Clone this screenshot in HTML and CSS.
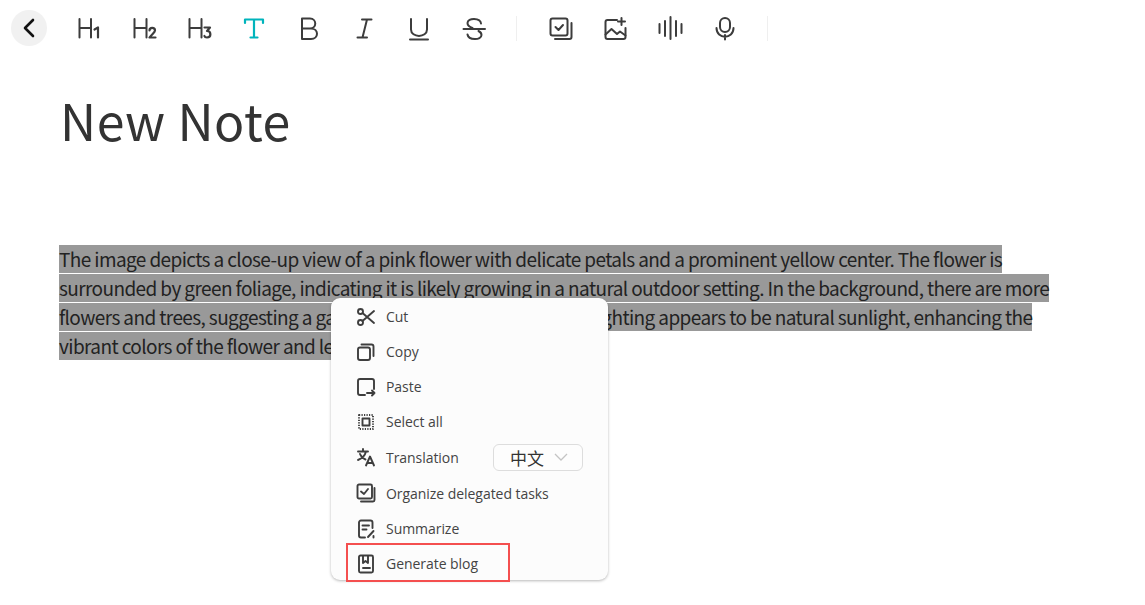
FILE: index.html
```html
<!DOCTYPE html>
<html lang="en">
<head>
<meta charset="utf-8">
<title>New Note</title>
<link rel="stylesheet" href="styles.css">
</head>
<body>
<header class="toolbar">
  <button class="back" aria-label="Back"><svg width="16" height="22" viewBox="0 0 16 22"><path class="k" d="M12 3 4 11l8 8"/></svg></button>
  <div class="tool"><svg viewBox="0 0 26 26"><path class="s" d="M3.500 4v18.500M15 4v18.500M3.500 13H15"/><path class="s b" d="M18.500 14.500l3.500-2v10"/></svg></div>
  <div class="tool"><svg viewBox="0 0 26 26"><path class="s" d="M3.500 4v18.500M15.500 4v18.500M3.500 13h12"/><path class="s b" d="M18.500 15.500c0-3.500 5.500-3.500 5.500 0 0 2-3.500 4-5.500 7h6"/></svg></div>
  <div class="tool"><svg viewBox="0 0 26 26"><path class="s" d="M3.500 4v18.500M15.500 4v18.500M3.500 13h12"/><path class="s b" d="M18.500 12.500h5.500l-3 3.500c4.500 0 4.500 6.500 0 6.500-1.200 0-2.300-.5-2.600-1.500"/></svg></div>
  <div class="tool"><svg viewBox="0 0 26 26"><path class="s teal" d="M4 8V4.500h18V8M13 4.500v18M9.500 22.500h7"/></svg></div>
  <div class="tool"><svg viewBox="0 0 26 26"><path class="s" d="M6 13.500h8c7 0 7-10 0-10H6v20.500h9c8 0 8-10.500 0-10.500"/></svg></div>
  <div class="tool"><svg viewBox="0 0 26 26"><path class="s" d="M11 4.500h9.500M6.500 22.500H16M16 4.500l-4.500 18"/></svg></div>
  <div class="tool"><svg viewBox="0 0 26 26"><path class="s" d="M5 4v10.500c0 8.500 16 8.500 16 0V4M4 24.500h18"/></svg></div>
  <div class="tool"><svg viewBox="0 0 26 26"><path class="s" d="M20 8.500c-.5-6-13.500-6-13.500-.5 0 2.500 2 4 5 5M17.500 16c2 1 3 2 3 4 0 5.500-13 5.500-14-.5M2.500 14h21.500"/></svg></div>
  <span class="divider first"></span>
  <div class="tool"><svg viewBox="0 0 26 26"><rect class="s" x="3.500" y="3.500" width="17" height="17" rx="2"/><path class="s" d="M24.500 8v14a2 2 0 0 1-2 2H8"/><path class="s" d="M8.500 12l3 3 4.500-5"/></svg></div>
  <div class="tool"><svg viewBox="0 0 26 26"><path class="s" d="M15 5H5.500a2 2 0 0 0-2 2v15a2 2 0 0 0 2 2h16a2 2 0 0 0 2-2v-9"/><path class="s" d="M3.500 19.500l6-5.500 5.500 5 3-2.500 5.500 4M19.500 3v7M16 6.500h7"/></svg></div>
  <div class="tool"><svg viewBox="0 0 26 26"><path class="s" d="M2.500 9v9M8 6v15M13.500 2v22M19 6v15M24.500 9v9"/></svg></div>
  <div class="tool"><svg viewBox="0 0 26 26"><rect class="s" x="8" y="3" width="10" height="14" rx="5"/><path class="s" d="M4.500 13c0 11.500 17 11.500 17 0M13 20v4.500"/></svg></div>
  <span class="divider"></span>
</header>

<main class="note">
  <h1 class="title">New Note</h1>
  <div class="body-text">
    <p class="line">The image depicts a close-up view of a pink flower with delicate petals and a prominent yellow center. The flower is</p>
    <p class="line">surrounded by green foliage, indicating it is likely growing in a natural outdoor setting. In the background, there are more</p>
    <p class="line">flowers and trees, suggesting a garden or park environment. The lighting appears to be natural sunlight, enhancing the</p>
    <p class="line">vibrant colors of the flower and leaves.</p>
  </div>
</main>

<nav class="menu">
  <div class="row"><svg viewBox="0 0 20 20"><circle class="m" cx="4.500" cy="4.500" r="2.500"/><circle class="m" cx="4.500" cy="15.500" r="2.500"/><path class="m" d="M6.500 6 18 16M6.500 14 18 4"/></svg><span>Cut</span></div>
  <div class="row"><svg viewBox="0 0 20 20"><rect class="m" x="2" y="5.500" width="12" height="12.500" rx="2"/><path class="m" d="M5.500 2.500h10a2 2 0 0 1 2 2V14"/></svg><span>Copy</span></div>
  <div class="row"><svg viewBox="0 0 20 20"><path class="m" d="M9 18H4a2 2 0 0 1-2-2V4a2 2 0 0 1 2-2h12a2 2 0 0 1 2 2v8"/><path class="m" d="M11 16h7.500M16 13.500l2.500 2.500-2.500 2.500"/></svg><span>Paste</span></div>
  <div class="row"><svg viewBox="0 0 20 20"><rect class="m dot" x="3" y="3" width="14" height="14"/><rect class="m" x="6.500" y="6.500" width="7" height="7"/></svg><span>Select all</span></div>
  <div class="row tall"><svg viewBox="0 0 20 20"><path class="m" d="M2 4.500h10M7 2v2.500M10 4.500c-1 4-4 7-8 8.500M4 7c1 2.500 3 4.500 5.500 5.500M10 18.500l4-9 4 9M11.500 16h5"/></svg><span>Translation</span>
    <div class="select"><span class="lang">中文</span><svg class="chev" viewBox="0 0 14 8"><path d="M1 1l6 6 6-6"/></svg></div>
  </div>
  <div class="row tall"><svg viewBox="0 0 20 20"><rect class="m" x="1.500" y="1.500" width="14.500" height="14" rx="1.500"/><path class="m" d="M18.500 5v12a1.500 1.500 0 0 1-1.500 1.500H5M5 8.500l3 2.500 4-5"/></svg><span>Organize delegated tasks</span></div>
  <div class="row"><svg viewBox="0 0 20 20"><path class="m" d="M9 18.500H5a2 2 0 0 1-2-2V3.500a2 2 0 0 1 2-2h9.500a2 2 0 0 1 2 2V9M6.500 6.500h6.500M6.500 10.500h4M12 18l5.500-6M17.500 17v1.500"/></svg><span>Summarize</span></div>
  <div class="row"><svg viewBox="0 0 20 20"><rect class="m" x="3" y="1.500" width="14" height="17" rx="1.500"/><path class="m" d="M7 2v7l2.500-2 2.500 2V2M7 14h7"/></svg><span>Generate blog</span></div>
  <div class="highlight"></div>
</nav>
</body>
</html>
```
FILE: styles.css
```css
html, body {
  margin: 0;
  height: 605px;
  overflow: hidden;
  background: #fff;
}
body {
  position: relative;
  font-family: "Noto Sans CJK SC", "Noto Sans", sans-serif;
  color: #333;
}
.toolbar {
  display: flex;
  align-items: center;
  height: 36px;
  padding: 10px 0 0 11px;
}
.back {
  width: 36px;
  height: 36px;
  margin-right: 14px;
  padding: 0;
  border: 0;
  border-radius: 50%;
  background: #f1f1f1;
  display: flex;
  align-items: center;
  justify-content: center;
}
.tool {
  width: 55px;
  height: 26px;
  display: flex;
  justify-content: center;
}
.tool svg {
  width: 26px;
  height: 26px;
}
.s, .k, .m {
  fill: none;
  stroke-linecap: round;
  stroke-linejoin: round;
}
.s {
  stroke: #3c3c3c;
  stroke-width: 2;
}
.s.b { stroke-width: 2.200; }
.s.teal { stroke: #00b4bc; stroke-width: 2.200; }
.k {
  stroke: #111;
  stroke-width: 2.600;
}
.divider {
  width: 1px;
  height: 25px;
  background: #efefef;
  margin-left: 15px;
}
.divider.first { margin-right: 15px; }
.note {
  padding: 37px 0 0 59px;
}
.title {
  margin: 0 0 90px 1px;
  font-size: 50px;
  line-height: 72px;
  font-weight: 400;
  letter-spacing: .5px;
  color: #333;
}
.line {
  width: fit-content;
  height: 28px;
  margin: 0 0 1px;
  background: #999;
  font-size: 19px;
  letter-spacing: -.6px;
  line-height: 28px;
  color: #222;
  white-space: nowrap;
}
.menu {
  position: absolute;
  left: 331px;
  top: 298px;
  width: 277px;
  height: 282px;
  box-sizing: border-box;
  padding-top: 1px;
  background: #fcfcfc;
  border-radius: 9px;
  box-shadow: 0 1px 3px rgba(0, 0, 0, .28);
  font-family: "Open Sans", sans-serif;
  font-size: 14px;
  letter-spacing: -.05px;
  color: #444;
}
.row {
  display: flex;
  align-items: center;
  height: 35px;
  padding-left: 25px;
}
.row.tall { height: 36px; }
.row svg {
  width: 20px;
  height: 20px;
  margin-right: 10px;
  flex: none;
}
.m {
  stroke: #3e3e3e;
  stroke-width: 1.900;
}
.m.dot { stroke-dasharray: 1.200 1.300; stroke-linecap: butt; }
.select {
  width: 90px;
  height: 27px;
  box-sizing: border-box;
  margin-left: auto;
  margin-right: 25px;
  display: flex;
  align-items: center;
  padding-left: 16px;
  border: 1px solid #ddd;
  border-radius: 6px;
  background: #fdfdfd;
}
.lang {
  font-family: "Noto Sans CJK SC", sans-serif;
  font-size: 17px;
  color: #333;
}
.row .chev {
  width: 14px;
  height: 8px;
  margin: 0 0 0 10px;
  fill: none;
  stroke: #c4c4c4;
  stroke-width: 1.300;
}
.highlight {
  position: absolute;
  left: 15px;
  top: 245px;
  width: 160px;
  height: 35px;
  border: 2px solid #f44f4f;
}
```
